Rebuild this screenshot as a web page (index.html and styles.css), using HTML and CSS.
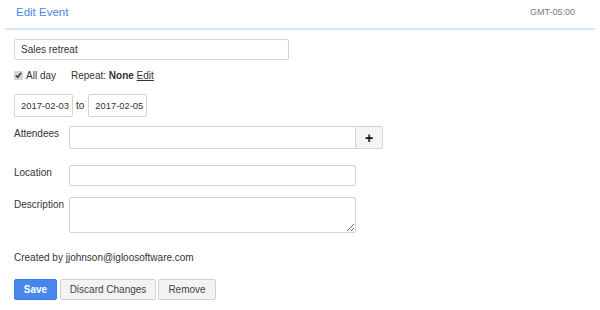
FILE: index.html
```html
<!DOCTYPE html>
<html lang="en">
<head>
    <meta charset="UTF-8">
    <meta name="viewport" content="width=device-width, initial-scale=1.0">
    <title>Edit Event</title>
    <link rel="stylesheet" href="styles.css">
</head>
<body>
    <div class="header">
        <span class="title">Edit Event</span>
        <span class="tz">GMT-05:00</span>
    </div>
    <form class="event" id="eventForm">
        <input type="text" class="name" value="Sales retreat">

        <div class="allday">
            <label><input type="checkbox" checked> All day</label>
            <span class="repeat">Repeat: <b>None</b> <a href="#">Edit</a></span>
        </div>

        <div class="dates">
            <input type="text" class="date" value="2017-02-03">
            <span>to</span>
            <input type="text" class="date" value="2017-02-05">
        </div>

        <div class="row attendees">
            <label>Attendees</label>
            <input type="text" class="field">
            <button type="button" class="add">+</button>
        </div>

        <div class="row location">
            <label>Location</label>
            <input type="text" class="field">
        </div>

        <div class="row description">
            <label>Description</label>
            <textarea class="field"></textarea>
        </div>

        <p class="created">Created by jjohnson@igloosoftware.com</p>

        <div class="actions">
            <button type="submit" class="btn save">Save</button>
            <button type="button" class="btn discard">Discard Changes</button>
            <button type="button" class="btn remove">Remove</button>
        </div>
    </form>
</body>
</html>
```

FILE: styles.css
```css
* {
    box-sizing: border-box;
}
body {
    margin: 0;
    font-family: "Liberation Sans", Arial, sans-serif;
    font-size: 10px;
    color: #333;
    background: #fff;
}
.header {
    margin: 0 5px;
    height: 30px;
    padding: 0 20px 4px 11px;
    display: flex;
    justify-content: space-between;
    align-items: center;
    border-bottom: 2px solid #d7e5fa;
}
.title {
    color: #4a86e8;
    font-size: 11.5px;
}
.tz {
    color: #777;
    font-size: 9px;
}
.event {
    padding: 9px 14px;
}
input[type="text"], textarea {
    font-family: inherit;
    font-size: 10px;
    color: #333;
    border: 1px solid #d4d4d4;
    border-radius: 2px;
    padding: 0 6px;
    margin: 0;
    background: #fff;
}
.name {
    display: block;
    width: 275px;
    height: 21px;
}
.allday {
    margin-top: 8px;
    height: 14px;
    display: flex;
    align-items: center;
}
.allday label {
    display: flex;
    align-items: center;
}
.allday input {
    width: 9px;
    height: 9px;
    margin: 0 3px 0 0;
    accent-color: #d6d6d6;
}
.repeat {
    margin-left: 15px;
}
.repeat a {
    color: #333;
}
.dates {
    margin-top: 12px;
    display: flex;
    align-items: center;
}
.dates span {
    margin: 0 4px 0 3px;
}
input.date {
    width: 59px;
    height: 23px;
    padding: 0 0 0 6px;
    font-size: 9.4px;
}
.row {
    display: flex;
    align-items: flex-start;
}
.row label {
    width: 55px;
    padding-top: 2px;
    line-height: 12px;
}
.field {
    width: 287px;
    height: 21px;
}
.attendees {
    margin-top: 9px;
}
.attendees .field {
    height: 23px;
    border-radius: 2px 0 0 2px;
}
.add {
    width: 27px;
    height: 23px;
    border: 1px solid #d4d4d4;
    border-left: none;
    border-radius: 0 2px 2px 0;
    background: #f4f4f4;
    font-family: inherit;
    font-size: 14px;
    font-weight: bold;
    color: #111;
    padding: 0;
    line-height: 20px;
}
.location {
    margin-top: 16px;
}
.description {
    margin-top: 11px;
}
.description .field {
    height: 36px;
    padding: 3px 6px;
    resize: vertical;
}
.created {
    margin: 18px 0 0;
    line-height: 14px;
}
.actions {
    margin-top: 14px;
    display: flex;
    gap: 3px;
}
.btn {
    height: 21px;
    padding: 0;
    font-family: inherit;
    font-size: 10px;
    color: #444;
    background: #f3f3f3;
    border: 1px solid #d0d0d0;
    border-radius: 2px;
    cursor: pointer;
}
.btn.save {
    width: 43px;
    background: #4787ed;
    border-color: #3c7ae4;
    color: #fff;
    font-weight: bold;
}
.btn.discard {
    width: 96px;
}
.btn.remove {
    width: 58px;
    margin-left: -1px;
}
```
